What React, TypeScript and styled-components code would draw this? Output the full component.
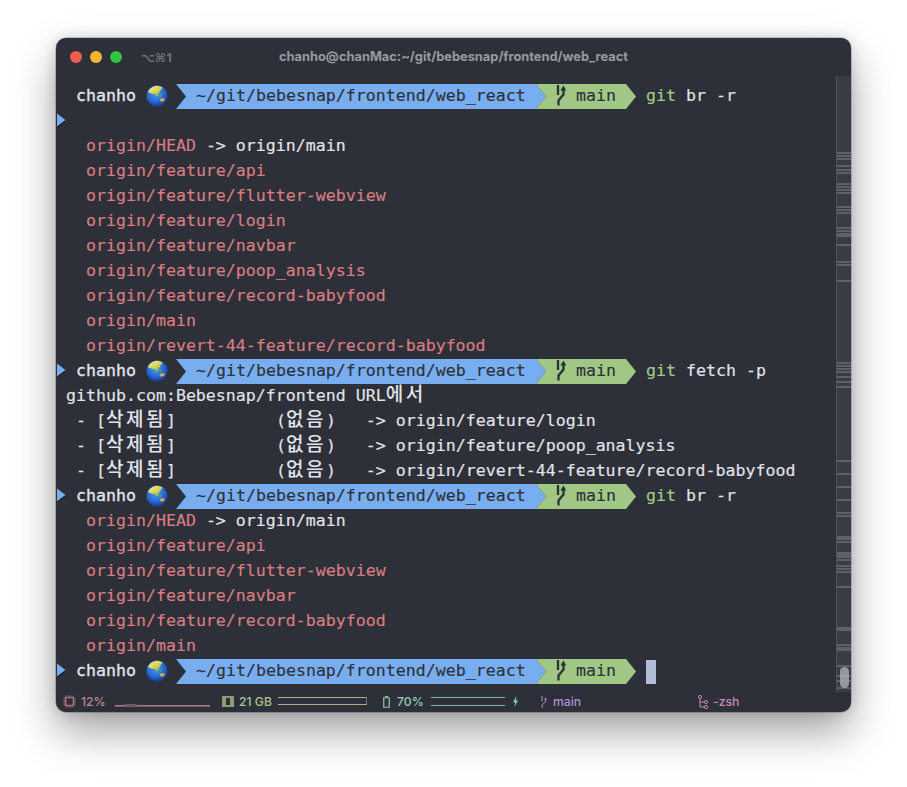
import React from "react";
import styled, { createGlobalStyle } from "styled-components";

const Global = createGlobalStyle`
  html, body { margin: 0; padding: 0; background: #fff; }
  body { width: 907px; height: 787px; overflow: hidden; }
`;

const Page = styled.div`
  width: 907px;
  height: 787px;
  padding: 38px 56px 0;
  box-sizing: border-box;
`;

const Window = styled.div`
  width: 795px;
  height: 674px;
  background: #2e3039;
  border-radius: 10px;
  display: flex;
  flex-direction: column;
  overflow: hidden;
  box-shadow: 0 0 0 0.5px rgba(0, 0, 0, 0.35), 0 20px 42px rgba(0, 0, 0, 0.36), 0 0 14px rgba(0, 0, 0, 0.14);
`;

const TitleBar = styled.div`
  height: 38px;
  flex: none;
  display: grid;
  grid-template-columns: 1fr auto 1fr;
  align-items: center;
`;

const Lights = styled.div`
  display: flex;
  align-items: center;
  gap: 8px;
  padding-left: 14px;
`;

const Light = styled.span<{ $c: string }>`
  width: 12px;
  height: 12px;
  border-radius: 50%;
  background: ${(p) => p.$c};
`;

const TabHint = styled.span`
  margin-left: 11px;
  font: 700 12px "Noto Sans", "DejaVu Sans", sans-serif;
  color: #6d7079;
`;

const Title = styled.div`
  font: 700 12.85px Inter, sans-serif;
  color: #989aa1;
  white-space: nowrap;
  margin-top: -1px;
`;

const Middle = styled.div`
  flex: 1;
  display: flex;
  min-height: 0;
`;

const Term = styled.div`
  flex: 1;
  padding-top: 7px;
  min-width: 0;
`;

const Row = styled.div`
  height: 25px;
  line-height: 25px;
  font-family: "DejaVu Sans Mono", monospace;
  font-size: 16.6px;
  white-space: pre;
  color: #e2e4ea;
  -webkit-text-stroke: 0.15px currentColor;
  display: flex;
  align-items: flex-start;
`;

const Gutter = styled.span`
  flex: none;
  width: 10px;
  height: 25px;
  display: flex;
  align-items: center;
`;

const Line = styled.span`
  display: block;
  flex: none;
`;

const Pink = styled.span`
  color: #d97d82;
`;

const Hangul = styled.span`
  font-family: "Noto Sans CJK KR", sans-serif;
  font-size: 19px;
  font-weight: 500;
  letter-spacing: 2.52px;
  line-height: 0;
  -webkit-text-stroke: 0;
`;

const User = styled.span`
  flex: none;
  width: 70px;
  margin-left: 10px;
  color: #e4e6ec;
  -webkit-text-stroke: 0.3px currentColor;
`;

const GlobeWrap = styled.span`
  flex: none;
  width: 30px;
  height: 25px;
  display: flex;
  align-items: center;
`;

const Segment = styled.span<{ $w: number; $bg: string }>`
  flex: none;
  width: ${(p) => p.$w}px;
  height: 25px;
  margin-top: 1px;
  line-height: 24px;
  background: ${(p) => p.$bg};
  color: #2e3039;
  display: flex;
  align-items: flex-start;
  box-sizing: border-box;
  clip-path: polygon(0 0, calc(100% - 10px) 0, 100% 50%, calc(100% - 10px) 100%, 0 100%, 10px 50%);
`;

const PathSeg = styled(Segment)`
  padding-left: 20px;
`;

const BranchSeg = styled(Segment)`
  margin-left: -10px;
  padding-left: 20px;
  gap: 10px;
`;

const BranchIcon = styled.svg`
  flex: none;
  width: 10px;
  height: 25px;
`;

const Command = styled.span`
  margin-left: 10px;
  flex: none;
`;

const Cmd = styled.span`
  color: #a5cb87;
`;

const Cursor = styled.span`
  flex: none;
  margin: 2px 0 0 10px;
  width: 10px;
  height: 24px;
  background: #b1bcd6;
`;

const Scroll = styled.div`
  flex: none;
  width: 15px;
  height: 616px;
  box-sizing: border-box;
  background: #3a3c45;
  border-left: 1px solid #50525b;
  position: relative;
`;

const Tick = styled.i`
  position: absolute;
  left: 0;
  right: 0;
  height: 2px;
  background: #5f6169;
`;

const Thumb = styled.i`
  position: absolute;
  left: 3px;
  width: 9px;
  top: 591px;
  height: 21px;
  border-radius: 5px;
  background: rgba(172, 174, 180, 0.8);
`;

const Status = styled.div`
  height: 20px;
  flex: none;
  display: flex;
  align-items: center;
  padding-left: 7px;
  padding-bottom: 1px;
  box-sizing: border-box;
  font: 500 12.2px Inter, sans-serif;
`;

const Section = styled.div<{ $w: number; $c: string }>`
  flex: none;
  width: ${(p) => p.$w}px;
  height: 20px;
  display: flex;
  align-items: center;
  color: ${(p) => p.$c};
`;

const Label = styled.span<{ $l: number; $w?: number }>`
  margin-left: ${(p) => p.$l}px;
  ${(p) => (p.$w ? `width: ${p.$w}px;` : "")}
  flex: none;
`;

const Graph = styled.svg<{ $l: number }>`
  flex: none;
  margin-left: ${(p) => p.$l}px;
  overflow: visible;
`;

const StatusIcon = styled.svg<{ $l?: number }>`
  flex: none;
  overflow: visible;
  margin-left: ${(p) => p.$l ?? 0}px;
`;

const Arrow = () => (
  <svg width="10" height="15" viewBox="0 0 10 15">
    <path d="M1 1.5 L9.5 8 L1.5 14.5 Z" fill="#111" />
    <path d="M1 0.5 L9.5 7 L1 13.5 Z" fill="#78adf0" />
  </svg>
);

const Globe = () => (
  <svg width="22" height="22" viewBox="0 0 22 22">
    <defs>
      <radialGradient id="ocean" cx="45%" cy="38%" r="68%">
        <stop offset="0" stopColor="#4f9fe6" />
        <stop offset="0.6" stopColor="#2466cf" />
        <stop offset="1" stopColor="#112f7e" />
      </radialGradient>
      <linearGradient id="land" x1="0" y1="0" x2="1" y2="1">
        <stop offset="0" stopColor="#f4f0a0" />
        <stop offset="0.5" stopColor="#d9d453" />
        <stop offset="1" stopColor="#5ea860" />
      </linearGradient>
    </defs>
    <circle cx="11" cy="11" r="10.6" fill="url(#ocean)" />
    <path d="M2 7 C3.4 3.6 7 1 11 .8 C13.6 .8 15.6 1.8 16.6 2.8 C16.2 4.2 14.8 4.4 14.4 5.6 C14.8 7 13.4 7.6 12.4 8.2 C12.6 9.6 12 11 11 11.6 C10.2 10.8 9.8 9.6 9 9 C7.6 9.4 6.6 8.4 5.4 8.4 C4.2 8.6 3 8 2 7 Z" fill="url(#land)" />
    <path d="M13.6 9.6 l2 1.2 l-.8 1.2 l-1.6 -1 Z" fill="#5ea860" />
    <path d="M13.6 14.2 C15 13 18 13 19 14 C18.6 16 16.4 17 14.8 16.4 C14 15.8 13.6 15 13.6 14.2 Z" fill="#dca83c" />
  </svg>
);

const Branch = () => (
  <BranchIcon viewBox="0 0 10 25">
    <path d="M2 1 V11 M7.5 4.5 V10.5 L2.5 16.5 V21.5" fill="none" stroke="#2e3039" strokeWidth="2.3" />
    <path d="M4.4 6.6 L7.5 1.6 L10.4 6.6 Z" fill="#2e3039" />
  </BranchIcon>
);

const Prompt = ({ cmd, arrow = true, cursor }: { cmd?: [string, string]; arrow?: boolean; cursor?: boolean }) => (
  <Row>
    <Gutter>{arrow && <Arrow />}</Gutter>
    <User>chanho</User>
    <GlobeWrap>
      <Globe />
    </GlobeWrap>
    <PathSeg $w={370} $bg="#78adf0">~/git/bebesnap/frontend/web_react</PathSeg>
    <BranchSeg $w={100} $bg="#a0c884">
      <Branch />
      main
    </BranchSeg>
    {cmd && (
      <Command>
        <Cmd>{cmd[0]}</Cmd> {cmd[1]}
      </Command>
    )}
    {cursor && <Cursor />}
  </Row>
);

const Ref = ({ name, target }: { name: string; target?: string }) => (
  <Row>
    <Gutter />
    <Line>
      {"  "}
      <Pink>{name}</Pink>
      {target && ` -> ${target}`}
    </Line>
  </Row>
);

const Deleted = ({ to }: { to: string }) => (
  <Row>
    <Gutter />
    <Line>
      {" - ["}
      <Hangul>삭제됨</Hangul>
      {"]          ("}
      <Hangul>없음</Hangul>
      {`)   -> ${to}`}
    </Line>
  </Row>
);

const ticks = [
  152, 155, 158, 165, 169, 172, 183, 186, 189, 192, 206, 209, 212, 227, 230, 233, 235, 244, 261, 264, 280, 362, 365,
  368, 371, 376, 381, 386, 460, 473, 486, 499, 512, 515, 536, 538, 541, 552, 554, 556, 559, 565, 568, 571, 586, 627,
  629, 644, 647, 649, 665, 675, 680, 687,
];

const firstRefs = [
  "origin/feature/api",
  "origin/feature/flutter-webview",
  "origin/feature/login",
  "origin/feature/navbar",
  "origin/feature/poop_analysis",
  "origin/feature/record-babyfood",
  "origin/main",
  "origin/revert-44-feature/record-babyfood",
];

const secondRefs = [
  "origin/feature/api",
  "origin/feature/flutter-webview",
  "origin/feature/navbar",
  "origin/feature/record-babyfood",
  "origin/main",
];

export default function App() {
  return (
    <Page>
      <Global />
      <Window>
        <TitleBar>
          <Lights>
            <Light $c="#f05c50" />
            <Light $c="#f4b62e" />
            <Light $c="#30c63f" />
            <TabHint>⌥⌘1</TabHint>
          </Lights>
          <Title>chanho@chanMac:~/git/bebesnap/frontend/web_react</Title>
          <span />
        </TitleBar>
        <Middle>
          <Term>
            <Prompt arrow={false} cmd={["git", "br -r"]} />
            <Row>
              <Gutter>
                <Arrow />
              </Gutter>
            </Row>
            <Ref name="origin/HEAD" target="origin/main" />
            {firstRefs.map((r) => (
              <Ref key={r} name={r} />
            ))}
            <Prompt cmd={["git", "fetch -p"]} />
            <Row>
              <Gutter />
              <Line>
                github.com:Bebesnap/frontend URL<Hangul>에서</Hangul>
              </Line>
            </Row>
            <Deleted to="origin/feature/login" />
            <Deleted to="origin/feature/poop_analysis" />
            <Deleted to="origin/revert-44-feature/record-babyfood" />
            <Prompt cmd={["git", "br -r"]} />
            <Ref name="origin/HEAD" target="origin/main" />
            {secondRefs.map((r) => (
              <Ref key={r} name={r} />
            ))}
            <Prompt cursor />
          </Term>
          <Scroll>
            {ticks.map((t) => (
              <Tick key={t} style={{ top: t - 76 }} />
            ))}
            <Thumb />
          </Scroll>
        </Middle>
        <Status>
          <Section $w={159} $c="#bd8588">
            <StatusIcon width="13" height="13" viewBox="0 0 13 13">
              <path d="M2.5 2.5h8v8h-8z" fill="none" stroke="#a57478" strokeWidth="1.6" />
              <path d="M4 0v13M6.5 0v13M9 0v13M0 4h13M0 6.5h13M0 9h13" stroke="#a57478" strokeWidth="0.7" strokeDasharray="2 9" />
            </StatusIcon>
            <Label $l={5} $w={24}>12%</Label>
            <Graph $l={10} width="95" height="10" viewBox="0 0 95 10">
              <path d="M0 8.5 H8 L12 8 L18 7.8 L24 8.5 H95" fill="none" stroke="#b07c80" strokeWidth="1" />
              <path d="M0 9.5 H95" stroke="#7c5c62" strokeWidth="1" />
            </Graph>
          </Section>
          <Section $w={161} $c="#a9c48d">
            <StatusIcon width="12" height="11" viewBox="0 0 12 11">
              <path d="M0 0h12v11H0z M4 2v7h4V2z" fill="#8a9c78" fillRule="evenodd" />
            </StatusIcon>
            <Label $l={5}>21 GB</Label>
            <Graph $l={6} width="89" height="9" viewBox="0 0 89 9">
              <path d="M0 .5H89M0 7.5H89" stroke="#9fb387" strokeWidth="1" />
              <path d="M88.5 0.5V7.5" stroke="#6c7a60" strokeWidth="1" />
            </Graph>
          </Section>
          <Section $w={158} $c="#8fcdb0">
            <StatusIcon width="7" height="12" viewBox="0 0 7 12">
              <path d="M2 0.5h3M.75 1.75h5.5v9.5H.75z" fill="none" stroke="currentColor" strokeWidth="1.2" />
            </StatusIcon>
            <Label $l={7} $w={26}>70%</Label>
            <Graph $l={8} width="74" height="9" viewBox="0 0 74 9">
              <path d="M0 .5H74M0 8.5H74" stroke="#7fb89e" strokeWidth="1" />
            </Graph>
            <StatusIcon $l={8} width="5" height="11" viewBox="0 0 5 11">
              <path d="M3.4 0 L0 6.2 H2.2 L1.4 11 L5 4.4 H2.8 Z" fill="currentColor" />
            </StatusIcon>
          </Section>
          <Section $w={157} $c="#ad8fdb">
            <StatusIcon width="6" height="12" viewBox="0 0 6 12">
              <path d="M1 0V5.5M4.6 2.4V5C4.6 6.8 1.2 7.4 1.2 9.4V12" fill="none" stroke="currentColor" strokeWidth="1" />
              <path d="M3.2 3.4L4.6 1.2L6 3.4Z" fill="currentColor" />
            </StatusIcon>
            <Label $l={6}>main</Label>
          </Section>
          <Section $w={80} $c="#c886b9">
            <StatusIcon width="10" height="14" viewBox="0 0 10 14">
              <circle cx="2" cy="2" r="1.6" fill="none" stroke="currentColor" />
              <circle cx="8" cy="7" r="1.6" fill="none" stroke="currentColor" />
              <circle cx="8" cy="12" r="1.6" fill="none" stroke="currentColor" />
              <path d="M2 3.6V12H6.4M2 7H6.4" fill="none" stroke="currentColor" />
            </StatusIcon>
            <Label $l={5}>-zsh</Label>
          </Section>
        </Status>
      </Window>
    </Page>
  );
}
